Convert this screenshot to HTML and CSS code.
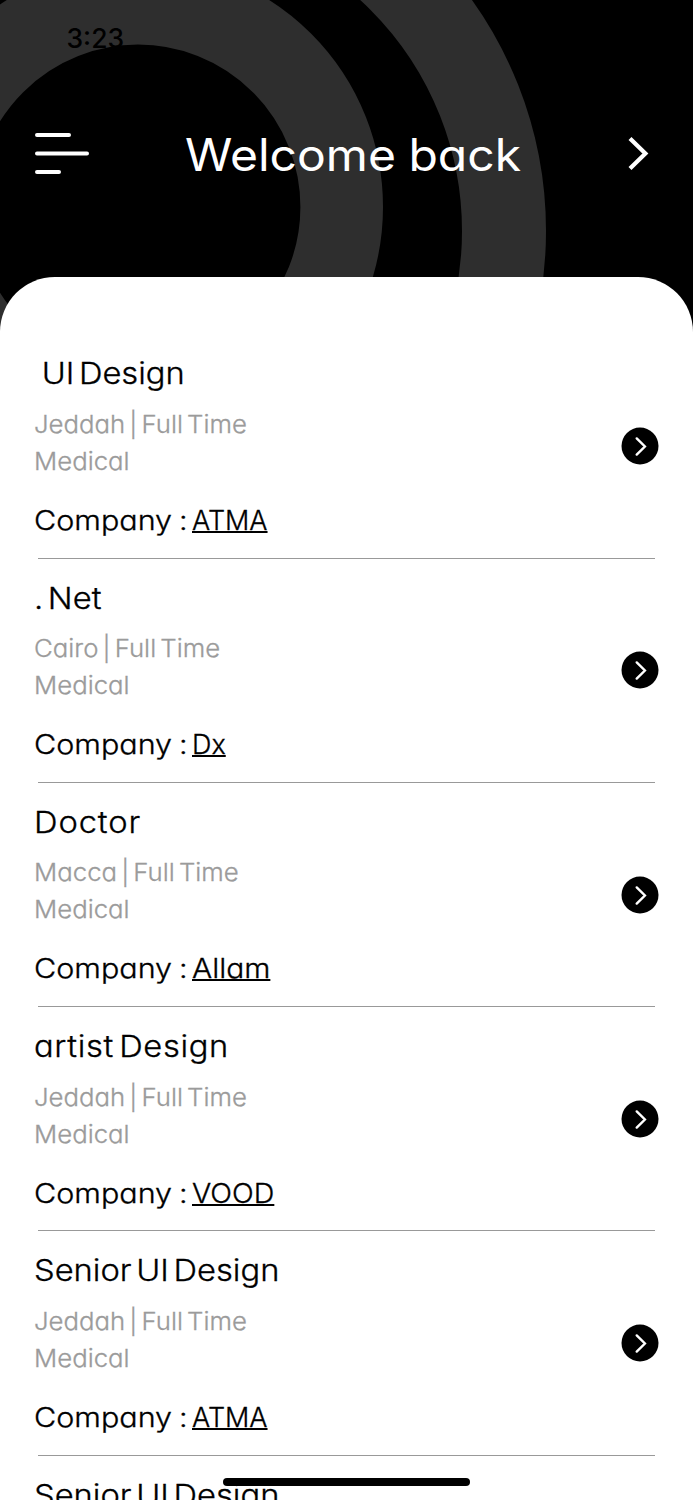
FILE: index.html
```
<!DOCTYPE html>
<html lang="en">
<head>
<meta charset="utf-8">
<title>Welcome back</title>
<link rel="stylesheet" href="styles.css">
</head>
<body>
<svg width="0" height="0" class="defs"><defs>
<symbol id="go" viewBox="0 0 38 38"><circle cx="19" cy="19" r="18.5"/><path d="M15.7 11.4L23.9 19.5L15.7 27.6" fill="none" stroke="#fff" stroke-width="2.4" stroke-linecap="round"/></symbol>
</defs></svg>
<div class="screen">
<header class="header">
<svg class="rings" viewBox="0 0 693 350"><g fill="none" stroke="#2e2e2e"><circle cx="138" cy="207" r="203.7" stroke-width="82.6"/><circle cx="149" cy="231" r="355" stroke-width="84"/></g></svg>
<div class="time">3:23</div>
<div class="bar">
<svg class="menu" viewBox="0 0 54 42"><path d="M2 2H34M2 20.5H52M2 39H24" stroke="#fff" stroke-width="4" stroke-linecap="round"/></svg>
<h1>Welcome back</h1>
<svg class="next" viewBox="0 0 24 36"><path d="M3 2.5L18.4 17.5L3 32.5" fill="none" stroke="#fff" stroke-width="4.2"/></svg>
</div>
</header>
<main class="panel">
<article class="job"><div class="info"><h2 class="indent">UI Design</h2><p>Jeddah | Full Time</p><p>Medical</p><div class="company"><span class="label">Company :</span><u>ATMA</u></div></div><svg class="go"><use href="#go"/></svg></article>
<article class="job"><div class="info"><h2 class="net">. Net</h2><p>Cairo | Full Time</p><p>Medical</p><div class="company"><span class="label">Company :</span><u>Dx</u></div></div><svg class="go"><use href="#go"/></svg></article>
<article class="job"><div class="info"><h2 class="doctor">Doctor</h2><p>Macca | Full Time</p><p>Medical</p><div class="company"><span class="label">Company :</span><u class="allam">Allam</u></div></div><svg class="go"><use href="#go"/></svg></article>
<article class="job"><div class="info"><h2 class="artist">artist Design</h2><p>Jeddah | Full Time</p><p>Medical</p><div class="company"><span class="label">Company :</span><u class="vood">VOOD</u></div></div><svg class="go"><use href="#go"/></svg></article>
<article class="job"><div class="info"><h2>Senior UI Design</h2><p>Jeddah | Full Time</p><p>Medical</p><div class="company"><span class="label">Company :</span><u>ATMA</u></div></div><svg class="go"><use href="#go"/></svg></article>
<article class="job"><div class="info"><h2>Senior UI Design</h2></div></article>
</main>
<div class="home"></div>
</div>
</body>
</html>
```
FILE: styles.css
```
* { box-sizing: border-box; margin: 0; padding: 0; }
body { background: #000; font-family: Inter, "Open Sans", sans-serif; font-feature-settings: "cv11" 1; color: #000; }
.defs { position: absolute; }
.screen { position: relative; width: 693px; height: 1500px; overflow: hidden; background: #000; display: flex; flex-direction: column; }
.header { height: 277px; flex: none; }
.rings { position: absolute; left: 0; top: 0; width: 693px; height: 350px; }
.time { position: relative; padding: 22px 0 0 66.5px; height: 123px; font-size: 26.5px; line-height: 32px; font-weight: 450; }
.bar { position: relative; height: 62px; padding: 0 42px 0 35px; display: flex; align-items: center; }
.menu { width: 54px; height: 42px; }
.bar h1 { margin: 1px 0 -1px 96px; flex: 1; color: #fff; font-size: 44.5px; font-weight: 400; line-height: 60px; white-space: nowrap; word-spacing: -1px; transform: scaleX(1.08); transform-origin: 0 50%; }
.next { width: 24px; height: 36px; }
.panel { position: relative; flex: 1 0 1223px; background: #fff; border-radius: 55px 55px 0 0; padding: 57.3px 34.5px 0 35px; }
.job { position: relative; height: 224.25px; display: flex; justify-content: space-between; align-items: center; }
.job::after { content: ""; position: absolute; left: 3px; right: 4px; bottom: 0; height: 1px; background: #999; }
.info { align-self: flex-start; padding-top: 19.1px; margin-left: -1px; white-space: nowrap; font-weight: 300; -webkit-text-stroke: .3px; }
h2, p, .label, u { transform-origin: 0 50%; }
h2 { font-size: 30px; line-height: 40px; font-weight: 300; margin-bottom: 12.5px; word-spacing: -4.2px; transform: scaleX(1.09); }
.indent { padding-left: 7px; }
.doctor { letter-spacing: .8px; }
.artist { letter-spacing: .6px; }
p { font-size: 24.5px; line-height: 37px; color: #9b9b9b; word-spacing: -3px; transform: scaleX(1.052); }
.company { display: flex; margin-top: 21px; font-size: 27px; line-height: 40px; }
.label { width: 158px; word-spacing: -1.5px; transform: scaleX(1.13); }
u { text-decoration-thickness: 1.5px; text-underline-offset: .5px; text-decoration-skip-ink: none; }
.allam { transform: scaleX(1.11); }
.vood { transform: scaleX(1.06); }
.go { width: 38px; height: 38px; flex: none; margin-bottom: .6px; }
.home { position: absolute; left: 223px; top: 1478px; width: 247px; height: 8px; border-radius: 4px; background: #000; }
```
